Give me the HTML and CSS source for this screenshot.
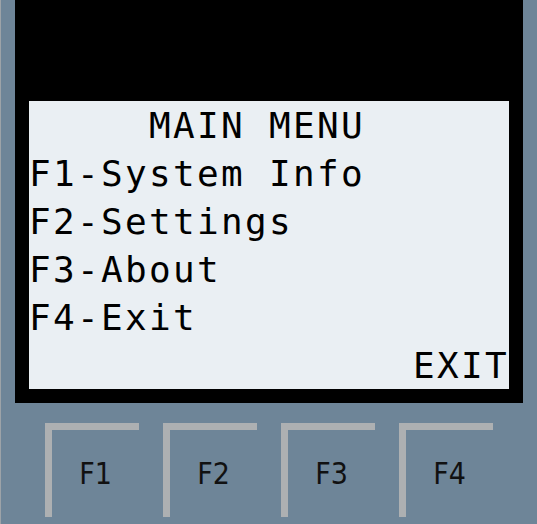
FILE: index.html
```html
<!DOCTYPE html>
<html lang="en">
<head>
    <meta charset="UTF-8">
    <meta name="viewport" content="width=device-width, initial-scale=1.0">
    <title>Operator Panel</title>
<link rel="stylesheet" href="styles.css">
</head>
<body>
    <section class="device">
        <div class="display">
            <div class="screen">
                <div class="row">     MAIN MENU</div>
                <div class="row">F1-System Info</div>
                <div class="row">F2-Settings</div>
                <div class="row">F3-About</div>
                <div class="row">F4-Exit</div>
                <div class="row">                EXIT</div>
            </div>
        </div>
        <div class="keys">
            <button class="key" type="button">F1</button>
            <button class="key" type="button">F2</button>
            <button class="key" type="button">F3</button>
            <button class="key" type="button">F4</button>
        </div>
    </section>
</body>
</html>
```

FILE: styles.css
```css
    body {
        margin: 0;
        background-color: #6e8598;
        }
    .device {
        box-sizing: border-box;
        min-height: 524px;
        border-left: 1px solid #9da3a8;
        padding: 0 14px;
        }
    .display {
        background-color: #000;
        padding: 101px 14px 14px;
        }
    .screen {
        background-color: #eaeff3;
        color: #000;
        font-family: "DejaVu Sans Mono", monospace;
        font-size: 36px;
        letter-spacing: 2.33px;
        line-height: 48px;
        }
    .row {
        height: 48px;
        padding-top: 1px;
        box-sizing: border-box;
        white-space: pre;
        }
    .keys {
        display: flex;
        gap: 24px;
        padding: 20px 0 0 30px;
        }
    .key {
        display: flex;
        align-items: center;
        justify-content: center;
        box-sizing: border-box;
        width: 94px;
        height: 94px;
        padding: 0;
        background: none;
        border: none;
        border-top: 7px solid #adb0b2;
        border-left: 7px solid #adb0b2;
        color: #111;
        font-family: "Liberation Sans Narrow", "DejaVu Sans Condensed", "Liberation Sans", sans-serif;
        font-size: 30px;
        }
```
